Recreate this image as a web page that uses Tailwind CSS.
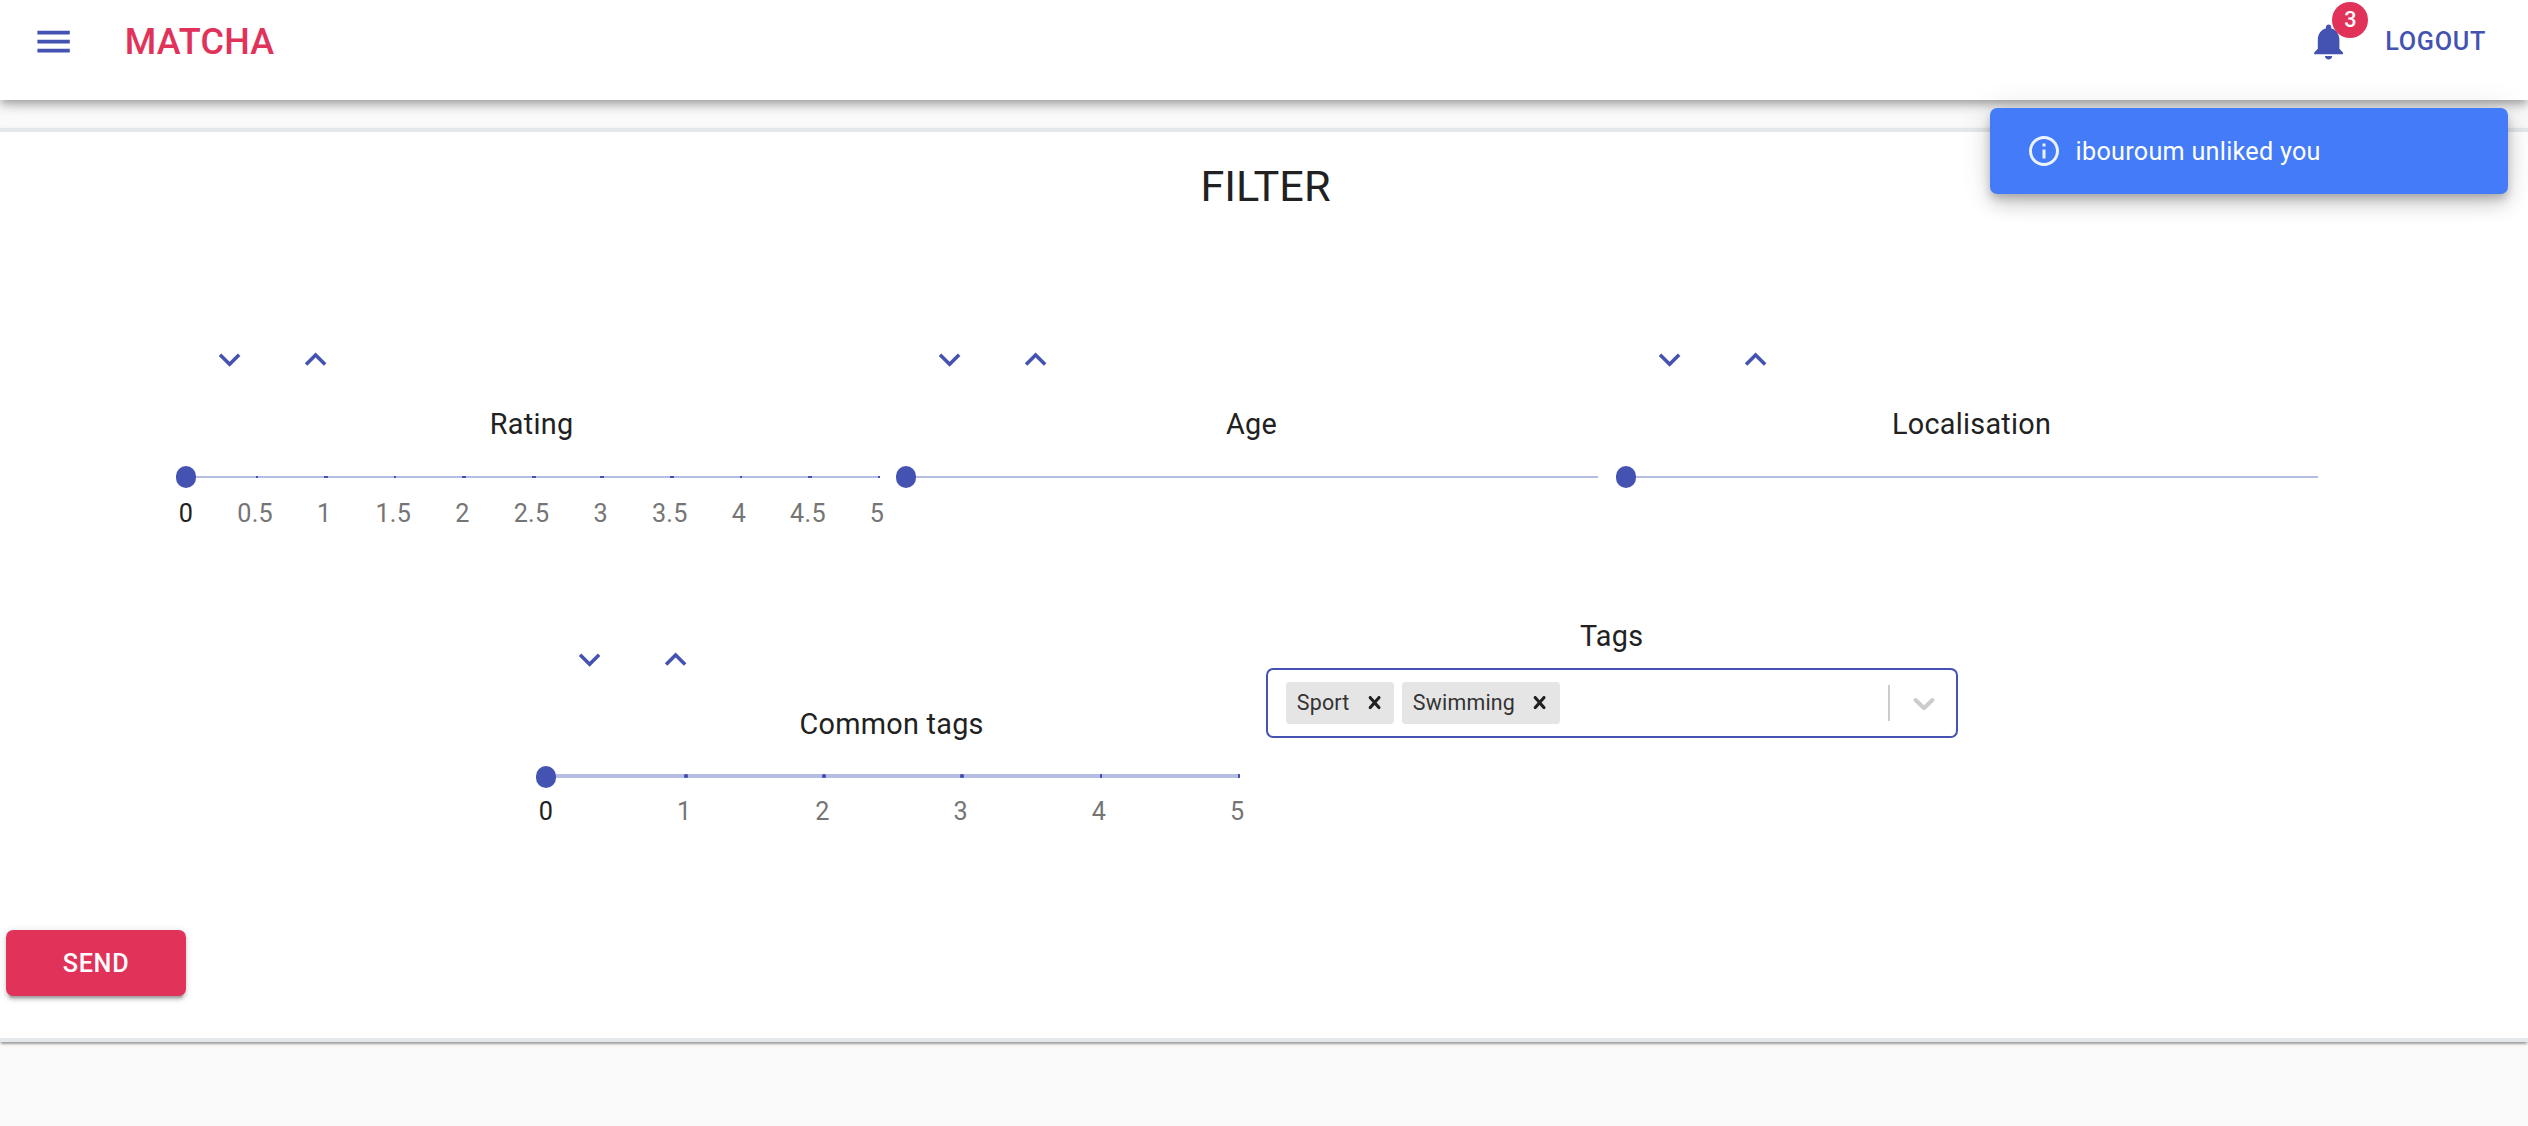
<!DOCTYPE html>
<html lang="en">
<head>
<meta charset="utf-8">
<title>Matcha</title>
<script src="https://cdn.jsdelivr.net/npm/@tailwindcss/browser@4"></script>
</head>
<body class="h-[1126px] overflow-hidden bg-[#fafafa] font-[Roboto,sans-serif] text-[#212121] antialiased">
<svg class="hidden">
  <symbol id="down" viewBox="0 0 24 24"><path d="M16.59 8.59L12 13.17 7.41 8.59 6 10l6 6 6-6z"/></symbol>
  <symbol id="up" viewBox="0 0 24 24"><path d="M12 8l-6 6 1.41 1.41L12 10.83l4.59 4.58L18 14z"/></symbol>
  <symbol id="cross" viewBox="0 0 20 20"><path d="M14.348 14.849c-0.469 0.469-1.229 0.469-1.697 0l-2.651-3.030-2.651 3.029c-0.469 0.469-1.229 0.469-1.697 0-0.469-0.469-0.469-1.229 0-1.697l2.758-3.15-2.759-3.152c-0.469-0.469-0.469-1.228 0-1.697s1.228-0.469 1.697 0l2.652 3.031 2.651-3.031c0.469-0.469 1.228-0.469 1.697 0s0.469 1.229 0 1.697l-2.758 3.152 2.758 3.15c0.469 0.469 0.469 1.229 0 1.698z"/></symbol>
</svg>

<header class="relative flex h-[100px] items-start bg-white pr-[42px] pl-[31.5px] shadow-[0_3.6px_7.2px_-1.8px_rgba(0,0,0,0.2),0_7.2px_9px_0_rgba(0,0,0,0.14),0_1.8px_18px_0_rgba(0,0,0,0.12)]">
  <button class="mt-5 shrink-0"><svg class="block size-[43.2px] fill-[#4453b1]" viewBox="0 0 24 24"><path d="M3 18h18v-2H3v2zm0-5h18v-2H3v2zm0-7v2h18V6H3z"/></svg></button>
  <h6 class="mt-[14px] ml-[50px] grow text-[36px] leading-[57px] font-medium tracking-[0.0075em] text-[#e1325a]">MATCHA</h6>
  <button class="relative mt-5 shrink-0">
    <svg class="block size-[43.2px] fill-[#4453b1]" viewBox="0 0 24 24"><path d="M12 22c1.1 0 2-.9 2-2h-4c0 1.1.89 2 2 2zm6-6v-5c0-3.07-1.64-5.64-4.5-6.32V4c0-.83-.67-1.5-1.5-1.5s-1.5.67-1.5 1.5v.68C7.63 5.36 6 7.92 6 11v5l-2 2v1h16v-1l-2-2z"/></svg>
    <span class="absolute top-[-18px] left-[25.5px] flex size-9 items-center justify-center rounded-full bg-[#e1325a] text-[21.6px] leading-none font-medium text-white">3</span>
  </button>
  <button class="mt-6 ml-[35px] text-[25.2px] leading-9 font-medium tracking-[0.02857em] text-[#4453b1]">LOGOUT</button>
</header>

<main class="mt-7 flex h-[914px] flex-col border-y-4 border-[#e4e8ea] bg-white shadow-[0_3.6px_1.8px_-1.8px_rgba(0,0,0,0.2),0_1.8px_1.8px_0_rgba(0,0,0,0.14),0_1.8px_5.4px_0_rgba(0,0,0,0.12)]">
  <h5 class="mt-[26px] pl-[3px] text-center text-[43.2px] leading-[58px]">FILTER</h5>

  <div class="mt-[122px] flex h-[284px] pl-[171.6px]">
    <section class="w-[720px] px-[14.4px]">
      <div class="flex h-11">
        <button class="flex w-[86.4px] justify-center"><svg class="size-[43.2px] fill-[#4453b1]"><use href="#down"/></svg></button>
        <button class="flex w-[86.4px] justify-center"><svg class="size-[43.2px] fill-[#4453b1]"><use href="#up"/></svg></button>
      </div>
      <p class="mt-6 text-center text-[28.8px] leading-9 tracking-[0.00938em]">Rating</p>
      <div class="relative mt-6 h-[22px] w-[692px]">
        <div class="absolute inset-x-0 top-[10px] h-0.5 bg-[#b6bde2]"></div>
        <i class="absolute top-[10px] left-[70.4px] h-0.5 w-0.5 bg-[#4453b1]"></i>
        <i class="absolute top-[10px] left-[138.4px] h-0.5 w-1 bg-[#4453b1]"></i>
        <i class="absolute top-[10px] left-[208.4px] h-0.5 w-0.5 bg-[#4453b1]"></i>
        <i class="absolute top-[10px] left-[276.4px] h-0.5 w-1 bg-[#4453b1]"></i>
        <i class="absolute top-[10px] left-[346.4px] h-0.5 w-1 bg-[#4453b1]"></i>
        <i class="absolute top-[10px] left-[414.4px] h-0.5 w-1 bg-[#4453b1]"></i>
        <i class="absolute top-[10px] left-[484.4px] h-0.5 w-1 bg-[#4453b1]"></i>
        <i class="absolute top-[10px] left-[554.4px] h-0.5 w-0.5 bg-[#4453b1]"></i>
        <i class="absolute top-[10px] left-[622.4px] h-0.5 w-1 bg-[#4453b1]"></i>
        <i class="absolute top-[10px] left-[692.4px] h-0.5 w-0.5 bg-[#4453b1]"></i>
        <div class="absolute top-0 -left-[10px] h-[22px] w-5 rounded-[10px] bg-[#4453b1]"></div>
      </div>
      <div class="mt-3 flex justify-between text-[25.2px] leading-7 tracking-[0.01071em] text-[#757575]">
        <span class="flex w-0 justify-center text-[#212121]">0</span><span class="flex w-0 justify-center">0.5</span><span class="flex w-0 justify-center">1</span><span class="flex w-0 justify-center">1.5</span><span class="flex w-0 justify-center">2</span><span class="flex w-0 justify-center">2.5</span><span class="flex w-0 justify-center">3</span><span class="flex w-0 justify-center">3.5</span><span class="flex w-0 justify-center">4</span><span class="flex w-0 justify-center">4.5</span><span class="flex w-0 justify-center">5</span>
      </div>
    </section>
    <section class="w-[720px] px-[14.4px]">
      <div class="flex h-11">
        <button class="flex w-[86.4px] justify-center"><svg class="size-[43.2px] fill-[#4453b1]"><use href="#down"/></svg></button>
        <button class="flex w-[86.4px] justify-center"><svg class="size-[43.2px] fill-[#4453b1]"><use href="#up"/></svg></button>
      </div>
      <p class="mt-6 text-center text-[28.8px] leading-9 tracking-[0.00938em]">Age</p>
      <div class="relative mt-6 h-[22px] w-[692px]">
        <div class="absolute inset-x-0 top-[10px] h-0.5 bg-[#b6bde2]"></div>
        <div class="absolute top-0 -left-[10px] h-[22px] w-5 rounded-[10px] bg-[#4453b1]"></div>
      </div>
    </section>
    <section class="w-[720px] px-[14.4px]">
      <div class="flex h-11">
        <button class="flex w-[86.4px] justify-center"><svg class="size-[43.2px] fill-[#4453b1]"><use href="#down"/></svg></button>
        <button class="flex w-[86.4px] justify-center"><svg class="size-[43.2px] fill-[#4453b1]"><use href="#up"/></svg></button>
      </div>
      <p class="mt-6 text-center text-[28.8px] leading-9 tracking-[0.00938em]">Localisation</p>
      <div class="relative mt-6 h-[22px] w-[692px]">
        <div class="absolute inset-x-0 top-[10px] h-0.5 bg-[#b6bde2]"></div>
        <div class="absolute top-0 -left-[10px] h-[22px] w-5 rounded-[10px] bg-[#4453b1]"></div>
      </div>
    </section>
  </div>

  <div class="flex h-[308px] pl-[531.6px]">
    <section class="w-[720px] px-[14.4px] pt-4">
      <div class="flex h-11">
        <button class="flex w-[86.4px] justify-center"><svg class="size-[43.2px] fill-[#4453b1]"><use href="#down"/></svg></button>
        <button class="flex w-[86.4px] justify-center"><svg class="size-[43.2px] fill-[#4453b1]"><use href="#up"/></svg></button>
      </div>
      <p class="mt-6 text-center text-[28.8px] leading-9 tracking-[0.00938em]">Common tags</p>
      <div class="relative mt-6 h-[22px] w-[694px]">
        <div class="absolute inset-x-0 top-2 h-1 rounded-[2px] bg-[#b6bde2]"></div>
        <i class="absolute top-2 left-[138.4px] size-1 rounded-[1.5px] bg-[#4453b1]"></i>
        <i class="absolute top-2 left-[276.4px] size-1 rounded-[1.5px] bg-[#4453b1]"></i>
        <i class="absolute top-2 left-[414.4px] size-1 rounded-[1.5px] bg-[#4453b1]"></i>
        <i class="absolute top-2 left-[554.4px] h-1 w-0.5 bg-[#4453b1]"></i>
        <i class="absolute top-2 left-[692.4px] h-1 w-0.5 bg-[#4453b1]"></i>
        <div class="absolute top-0 -left-[10px] h-[22px] w-5 rounded-[10px] bg-[#4453b1]"></div>
      </div>
      <div class="mt-[10px] flex justify-between text-[25.2px] leading-7 tracking-[0.01071em] text-[#757575]">
        <span class="flex w-0 justify-center text-[#212121]">0</span><span class="flex w-0 justify-center">1</span><span class="flex w-0 justify-center">2</span><span class="flex w-0 justify-center">3</span><span class="flex w-0 justify-center">4</span><span class="flex w-0 justify-center">5</span>
      </div>
    </section>
    <section class="w-[720px] px-[14.4px]">
      <p class="-mt-1 text-center text-[28.8px] leading-9 tracking-[0.00938em]">Tags</p>
      <div class="mt-[14px] flex h-[70px] w-[692px] items-center rounded-[7.2px] border-2 border-[#4453b1] bg-white pl-[18px]">
        <div class="flex grow gap-2 text-[21.42px] leading-[42px] tracking-[0.01em] text-[#333]">
          <div class="flex h-[42px] w-[108px] items-center justify-between rounded-[3.6px] bg-[#e5e5e5] pr-[6.5px] pl-[10.8px]">Sport<svg class="size-[25.2px] fill-[#212121]"><use href="#cross"/></svg></div>
          <div class="flex h-[42px] w-[158px] items-center justify-between rounded-[3.6px] bg-[#e5e5e5] pr-[7.5px] pl-[10.8px]">Swimming<svg class="size-[25.2px] fill-[#212121]"><use href="#cross"/></svg></div>
        </div>
        <div class="h-9 w-0.5 bg-[#ccc]"></div>
        <svg class="mr-[14px] ml-4 size-9 fill-[#ccc]" viewBox="0 0 20 20"><path d="M4.516 7.548c0.436-0.446 1.043-0.481 1.576 0l3.908 3.747 3.908-3.747c0.533-0.481 1.141-0.446 1.574 0 0.436 0.445 0.408 1.197 0 1.615-0.406 0.418-4.695 4.502-4.695 4.502-0.217 0.223-0.502 0.335-0.787 0.335s-0.57-0.112-0.789-0.335c0 0-4.287-4.084-4.695-4.502s-0.436-1.17 0-1.615z"/></svg>
      </div>
    </section>
  </div>

  <button class="ml-1.5 h-[66px] w-[180px] rounded-[7.2px] bg-[#e1325a] pt-0.5 text-[25.2px] font-medium tracking-[0.02857em] text-white shadow-[0_5.4px_1.8px_-3.6px_rgba(0,0,0,0.2),0_3.6px_3.6px_0_rgba(0,0,0,0.14),0_1.8px_9px_0_rgba(0,0,0,0.12)]">SEND</button>
</main>

<!-- Notification toast -->
<div class="absolute top-[108px] right-5 flex h-[86px] w-[518px] items-center rounded-[7.2px] bg-[#437bf8] pl-9 text-[25.2px] tracking-[0.01071em] text-white shadow-[0_5.4px_9px_-1.8px_rgba(0,0,0,0.2),0_10.8px_18px_0_rgba(0,0,0,0.14),0_1.8px_32.4px_0_rgba(0,0,0,0.12)]">
  <svg class="mr-[13.6px] size-9 fill-white/90" viewBox="0 0 24 24"><path d="M11 7h2v2h-2zm0 4h2v6h-2zm1-9C6.48 2 2 6.48 2 12s4.48 10 10 10 10-4.48 10-10S17.52 2 12 2zm0 18c-4.41 0-8-3.59-8-8s3.59-8 8-8 8 3.59 8 8-3.59 8-8 8z"/></svg>
  <span class="pt-0.5">ibouroum unliked you</span>
</div>
</body>
</html>
